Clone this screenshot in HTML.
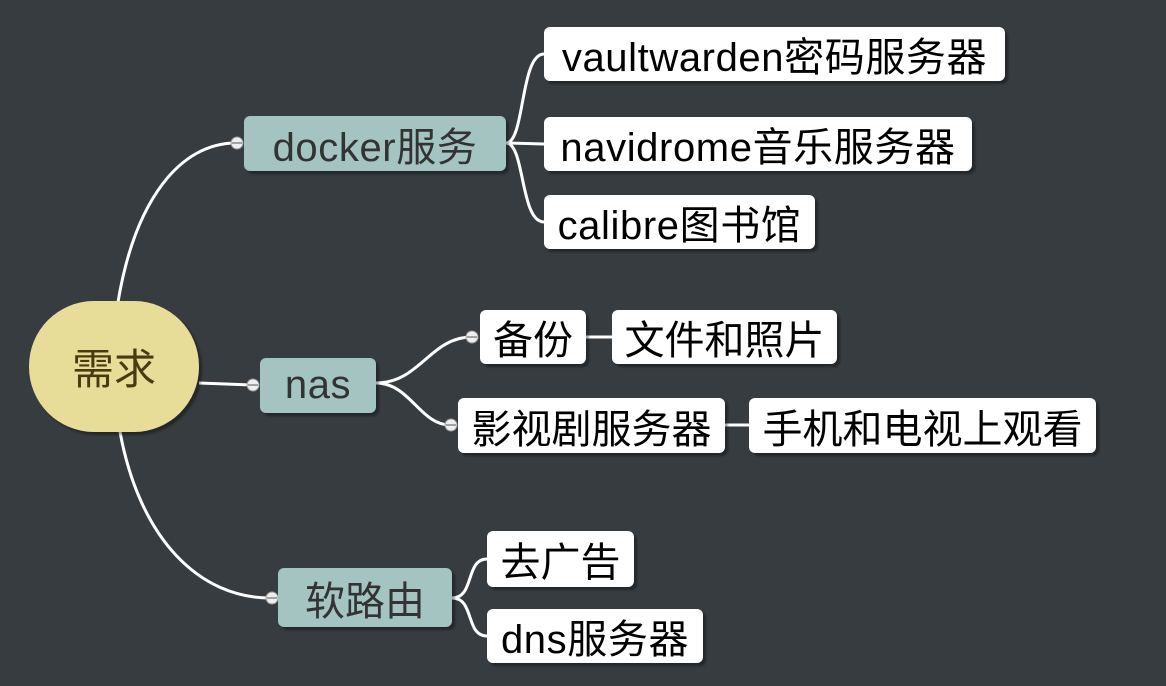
<!DOCTYPE html><html><head><meta charset="utf-8"><style>
body{margin:0;width:1166px;height:686px;background:#373c40;position:relative;overflow:hidden;font-family:"Liberation Sans","Noto Sans CJK SC",sans-serif}
.b{position:absolute;display:flex;align-items:center;justify-content:center;border-radius:6px;font-size:40px;white-space:nowrap;box-shadow:3px 3px 2px rgba(0,0,0,.35)}
.w{background:#fff;color:#000}
.g{background:#a3c4c0;color:#333}
.l{letter-spacing:0.6px}
svg{position:absolute;left:0;top:0}
</style></head><body>
<svg width="1166" height="686">
<g fill="none" stroke="#fff" stroke-width="3">
<path d="M118 302 C135 200 180 143 236 143"/>
<path d="M199 383 L252 385"/>
<path d="M120 432 C140 540 200 598 270 598"/>
<path d="M506 143 C525 143 520 54 544 54"/>
<path d="M506 143 L544 144"/>
<path d="M506 143 C525 143 520 222 544 222"/>
<path d="M376 383 C420 383 430 337 472 337"/>
<path d="M376 383 C410 383 420 425 450 425"/>
<path d="M586 337 L612 337"/>
<path d="M725 425 L749 425"/>
<path d="M452 598 C475 598 465 559 487 559"/>
<path d="M452 598 C475 598 465 636 487 636"/>
</g>
<g fill="#eee" stroke="#999" stroke-width="1">
<circle cx="237" cy="143" r="6"/><circle cx="253" cy="385" r="6"/><circle cx="272" cy="598" r="6"/>
<circle cx="472" cy="337" r="6"/><circle cx="451" cy="425" r="6"/>
</g>
<g stroke="#888" stroke-width="1.5">
<path d="M232 143h10M248 385h10M267 598h10M467 337h10M446 425h10"/>
</g>
</svg>
<div class="b" style="left:29px;top:301px;width:170px;height:131px;border-radius:65px;background:#e8dd98;color:#4a3a10;font-size:42px">需求</div>
<div class="b g l" style="left:244px;top:116px;width:262px;height:55px">docker服务</div>
<div class="b g l" style="left:260px;top:358px;width:116px;height:55px">nas</div>
<div class="b g" style="left:278px;top:568px;width:174px;height:59px">软路由</div>
<div class="b w l" style="left:544px;top:27px;width:461px;height:54px">vaultwarden密码服务器</div>
<div class="b w l" style="left:544px;top:117px;width:428px;height:54px">navidrome音乐服务器</div>
<div class="b w l" style="left:544px;top:195px;width:271px;height:54px">calibre图书馆</div>
<div class="b w" style="left:480px;top:310px;width:106px;height:54px">备份</div>
<div class="b w" style="left:612px;top:310px;width:225px;height:54px">文件和照片</div>
<div class="b w" style="left:458px;top:398px;width:267px;height:55px">影视剧服务器</div>
<div class="b w" style="left:749px;top:398px;width:347px;height:55px">手机和电视上观看</div>
<div class="b w" style="left:487px;top:531px;width:147px;height:56px">去广告</div>
<div class="b w l" style="left:487px;top:609px;width:216px;height:54px">dns服务器</div>
</body></html>
